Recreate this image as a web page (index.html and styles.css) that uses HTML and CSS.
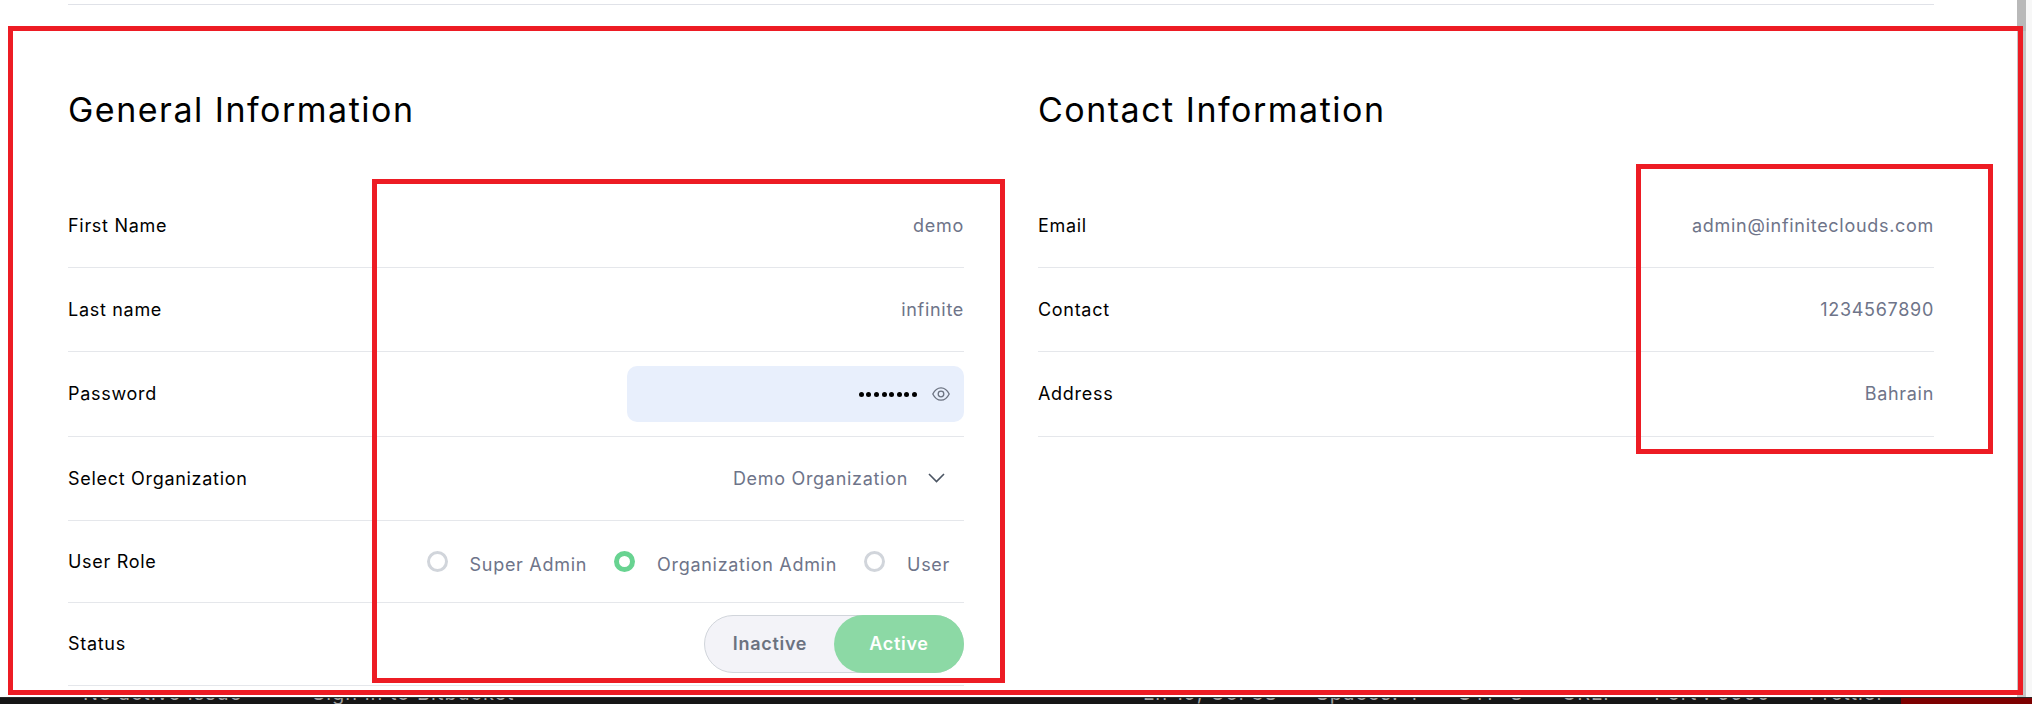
FILE: index.html
```html
<!DOCTYPE html>
<html lang="en">
<head>
    <meta charset="UTF-8">
    <meta name="viewport" content="width=device-width, initial-scale=1.0">
    <title>User details</title>
    <link rel="stylesheet" href="styles.css">
</head>
<body>
<div class="page">
    <div class="content">
        <div class="top-line"></div>
        <div class="columns">
            <section class="column">
                <h2>General Information</h2>
                <div class="row"><span class="label">First Name</span><span class="value">demo</span></div>
                <div class="row"><span class="label">Last name</span><span class="value">infinite</span></div>
                <div class="row">
                    <span class="label">Password</span>
                    <div class="password">
                        <div class="dots"><i></i><i></i><i></i><i></i><i></i><i></i><i></i><i></i></div>
                        <svg class="eye" width="18" height="14" viewBox="0 0 18 14" fill="none" stroke="#6b7280" stroke-width="1.3">
                            <path d="M.8 7C2.800 3 5.600 .8 9 .8s6.200 2.200 8.200 6.200c-2 4-4.800 6.200-8.200 6.200S2.800 11 .8 7z"/>
                            <circle cx="9" cy="7" r="2.800"/>
                        </svg>
                    </div>
                </div>
                <div class="row">
                    <span class="label">Select Organization</span>
                    <div class="select">
                        <span class="value">Demo Organization</span>
                        <svg width="17" height="10" viewBox="0 0 17 10" fill="none" stroke="#4b5563" stroke-width="1.6"><path d="M1 1l7.500 7.500L16 1"/></svg>
                    </div>
                </div>
                <div class="row row-role">
                    <span class="label">User Role</span>
                    <div class="radios">
                        <span class="radio"><i class="dot"></i>Super Admin</span>
                        <span class="radio"><i class="dot dot-on"></i>Organization Admin</span>
                        <span class="radio"><i class="dot"></i>User</span>
                    </div>
                </div>
                <div class="row row-status">
                    <span class="label">Status</span>
                    <div class="toggle"><span class="off">Inactive</span><span class="on">Active</span></div>
                </div>
            </section>
            <section class="column">
                <h2>Contact Information</h2>
                <div class="row"><span class="label">Email</span><span class="value">admin@infiniteclouds.com</span></div>
                <div class="row"><span class="label">Contact</span><span class="value">1234567890</span></div>
                <div class="row"><span class="label">Address</span><span class="value">Bahrain</span></div>
            </section>
        </div>
    </div>
    <div class="scrollbar"><div class="thumb"></div></div>
</div>
<div class="statusbar">
    <div class="status-left"><span>No active issue</span><span>Sign in to Bitbucket</span></div>
    <div class="status-right"><span>Ln 19, Col 38</span><span>Spaces: 4</span><span>UTF-8</span><span>CRLF</span><span>Port : 5500</span><span>Prettier</span></div>
    <div class="status-alert"></div>
</div>

<!-- red marks drawn over the screenshot -->
<div class="mark mark-outer"></div>
<div class="mark mark-left"></div>
<div class="mark mark-right"></div>
</body>
</html>
```

FILE: styles.css
```css
* {
    box-sizing: border-box;
}
html, body {
    margin: 0;
    padding: 0;
    height: 100%;
    overflow: hidden;
}
body {
    font-family: Inter, sans-serif;
    background: #fff;
    display: flex;
    flex-direction: column;
}
.page {
    height: 697px;
    display: flex;
    justify-content: space-between;
}
.content {
    width: 2017px;
    padding: 0 83px 0 68px;
}
.top-line {
    margin-top: 4px;
    border-top: 1px solid #e0e2e8;
}
.columns {
    display: flex;
    gap: 74px;
}
.column {
    flex: 1;
    min-width: 0;
}
h2 {
    margin: 0;
    padding: 83px 0 52px;
    font-size: 34px;
    line-height: 44px;
    font-weight: 400;
    letter-spacing: 1.500px;
    color: #000;
}
.row {
    height: 84.2px;
    display: flex;
    align-items: center;
    justify-content: space-between;
    border-bottom: 1px solid #e5e7eb;
    font-size: 18px;
    letter-spacing: .7px;
}
.row-role {
    height: 82px;
}
.row-status {
    height: 83px;
}
.label {
    color: #000;
}
.value {
    color: #6e7489;
}
.password {
    width: 337px;
    height: 56px;
    display: flex;
    align-items: center;
    justify-content: flex-end;
    gap: 15px;
    padding-right: 14px;
    background: #e8effc;
    border-radius: 10px;
}
.dots {
    display: flex;
    gap: 2.600px;
    margin-top: 2px;
}
.dots i {
    width: 5px;
    height: 5px;
    background: #000;
    border-radius: 50%;
}
.select {
    display: flex;
    align-items: center;
    gap: 20px;
    padding-right: 19px;
}
.radios {
    display: flex;
    align-items: center;
    gap: 27px;
    padding-right: 14px;
    color: #6e7489;
    padding-top: 6px;
}
.radio {
    display: flex;
    align-items: center;
    gap: 22px;
}
.dot {
    width: 21px;
    height: 21px;
    border: 3px solid #d1d5db;
    border-radius: 50%;
    margin-top: -6px;
}
.dot-on {
    border: 5px solid #68d391;
}
.toggle {
    width: 260px;
    height: 58px;
    display: flex;
    background: #f3f3f8;
    border: 1px solid #d1d5db;
    border-radius: 29px;
    font-weight: 600;
}
.off {
    flex: 1;
    display: flex;
    align-items: center;
    justify-content: center;
    color: #6b7280;
}
.on {
    width: 130px;
    margin: -1px;
    display: flex;
    align-items: center;
    justify-content: center;
    color: #fff;
    background: #8cd9a5;
    border-radius: 29px;
}
.scrollbar {
    width: 15px;
    background: #f7f7f7;
}
.thumb {
    width: 9px;
    height: 100%;
    background: linear-gradient(#b9b9b9 31px, #c6c6c6 31px);
}
/* only the lower edge of the status bar text shows in the shot */
.statusbar {
    flex: 1;
    display: flex;
    overflow: hidden;
    background: #161616;
    border-top: 1px solid #2a2a2a;
    color: #a0a0a0;
    font-size: 20px;
    line-height: 20px;
    letter-spacing: 1px;
}
.statusbar span {
    margin-top: -15px;
}
.status-left {
    display: flex;
    gap: 70px;
    padding-left: 83px;
}
.status-right {
    display: flex;
    gap: 38px;
    margin-left: auto;
    padding-right: 16px;
}
.status-alert {
    width: 131px;
    background: #7d0000;
}
.mark {
    position: absolute;
    border: 5px solid #ed1c24;
}
.mark-outer {
    left: 8px;
    top: 26px;
    width: 2015px;
    height: 669px;
}
.mark-left {
    left: 372px;
    top: 179px;
    width: 633px;
    height: 504px;
}
.mark-right {
    left: 1636px;
    top: 164px;
    width: 357px;
    height: 290px;
}
```
